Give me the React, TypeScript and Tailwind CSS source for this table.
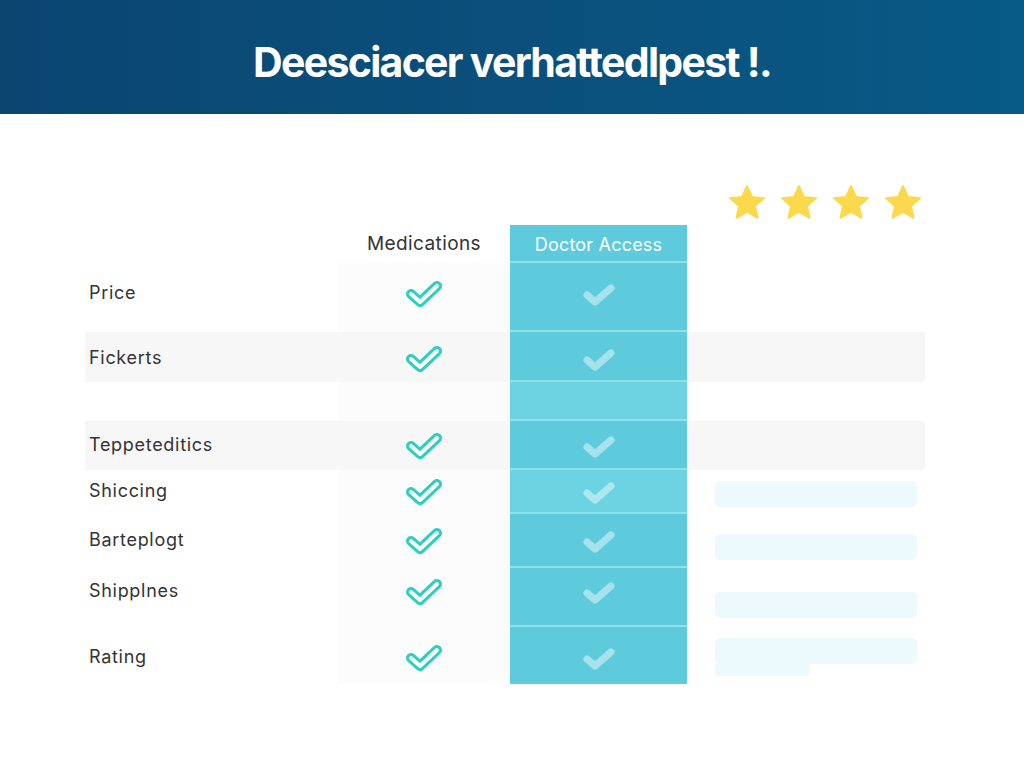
const rows = [
  { label: 'Price', h: 'h-[69px]', pad: 'pt-[17px]', shaded: false, light: false, check: true, bar: null },
  { label: 'Fickerts', h: 'h-[50px]', pad: 'pt-[13px]', shaded: true, light: false, check: true, bar: null },
  { label: '', h: 'h-[39px]', pad: 'pt-[13px]', shaded: false, light: true, check: false, bar: null },
  { label: 'Teppeteditics', h: 'h-[49px]', pad: 'pt-[11px]', shaded: true, light: false, check: true, bar: null },
  { label: 'Shiccing', h: 'h-[44px]', pad: 'pt-[8px]', shaded: false, light: true, check: true, bar: 'mt-[11px]' },
  { label: 'Barteplogt', h: 'h-[54px]', pad: 'pt-[13px]', shaded: false, light: false, check: true, bar: 'mt-[20px]' },
  { label: 'Shipplnes', h: 'h-[59px]', pad: 'pt-[10px]', shaded: false, light: false, check: true, bar: 'mt-[24px]' },
  { label: 'Rating', h: 'h-[57px]', pad: 'pt-[17px]', shaded: false, light: false, check: true, bar: 'mt-[11px]' },
]

function OutlineCheck() {
  return (
    <svg width="36" height="28" viewBox="0 0 36 28" fill="none">
      <path d="M5 14 L14 22 L31 6" stroke="#2ccfc0" strokeWidth="10" strokeLinecap="round" strokeLinejoin="round" />
      <path d="M5 14 L14 22 L31 6" stroke="#ffffff" strokeWidth="4" strokeLinecap="round" strokeLinejoin="round" />
    </svg>
  )
}

function SoftCheck() {
  return (
    <svg width="36" height="28" viewBox="0 0 36 28" fill="none">
      <path d="M6 15 L14 22 L30 8" stroke="#ffffff" strokeOpacity="0.45" strokeWidth="7" strokeLinecap="round" strokeLinejoin="round" />
    </svg>
  )
}

function Star() {
  return (
    <svg width="42" height="42" viewBox="0 0 24 24">
      <path
        d="M12 2.2l2.9 6.3 6.9.7-5.2 4.6 1.5 6.8L12 17.1l-6.1 3.5 1.5-6.8-5.2-4.6 6.9-.7z"
        fill="#fcd94c"
        stroke="#fcd94c"
        strokeWidth="1"
        strokeLinejoin="round"
      />
    </svg>
  )
}

export default function App() {
  return (
    <div className="w-[1024px] h-[768px] bg-white font-['Inter','Liberation_Sans',sans-serif] overflow-hidden">
      <header className="h-[114px] bg-gradient-to-r from-[#0a4670] via-[#0b4f7c] to-[#075a86] flex items-center justify-center">
        <h1 className="text-white text-[41px] font-bold tracking-[-1.7px] mt-[12px]">
          Deesciacer verhattedlpest !.
        </h1>
      </header>

      <main className="pl-[85px]">
        <div className="flex justify-end w-[840px] gap-[10px] pt-[68px] pr-[1px]">
          <Star />
          <Star />
          <Star />
          <Star />
        </div>

        <div className="mt-[1px] w-[840px]">
          <div className="grid grid-cols-[253px_172px_177px_238px] h-[38px]">
            <div />
            <div className="flex items-center justify-center text-[19px] tracking-[0.4px] text-[#333]">Medications</div>
            <div className="flex items-center justify-center bg-[#5ecbdc] text-white text-[18px] tracking-[0.2px] pt-[2px] border-b-2 border-[#8fe1ec]">
              Doctor Access
            </div>
            <div />
          </div>

          {rows.map((r, i) => (
            <div
              key={i}
              className={`grid grid-cols-[253px_172px_177px_238px] ${r.h} ${r.shaded ? 'bg-[#f7f7f7]' : 'bg-white'}`}
            >
              <div className={`${r.pad} pl-[4px] text-[18px] tracking-[0.7px] text-[#333] leading-[26px]`}>{r.label}</div>
              <div className={`${r.pad} flex justify-center ${r.shaded ? '' : 'bg-[#fcfcfc]'}`}>
                {r.check && <OutlineCheck />}
              </div>
              <div
                className={`${r.pad} flex justify-center ${r.light ? 'bg-[#6bd3e2]' : 'bg-[#5ecbdc]'} ${
                  i === rows.length - 1 ? '' : 'border-b-2 border-[#8fe1ec]'
                }`}
              >
                {r.check && <SoftCheck />}
              </div>
              <div className="pl-[28px]">
                {r.bar && <div className={`${r.bar} w-[202px] h-[26px] rounded-[5px] bg-[#ecfafd]`} />}
                {r.label === 'Rating' && <div className="w-[95px] h-[12px] rounded-b-[4px] bg-[#ecfafd]" />}
              </div>
            </div>
          ))}
        </div>
      </main>
    </div>
  )
}
